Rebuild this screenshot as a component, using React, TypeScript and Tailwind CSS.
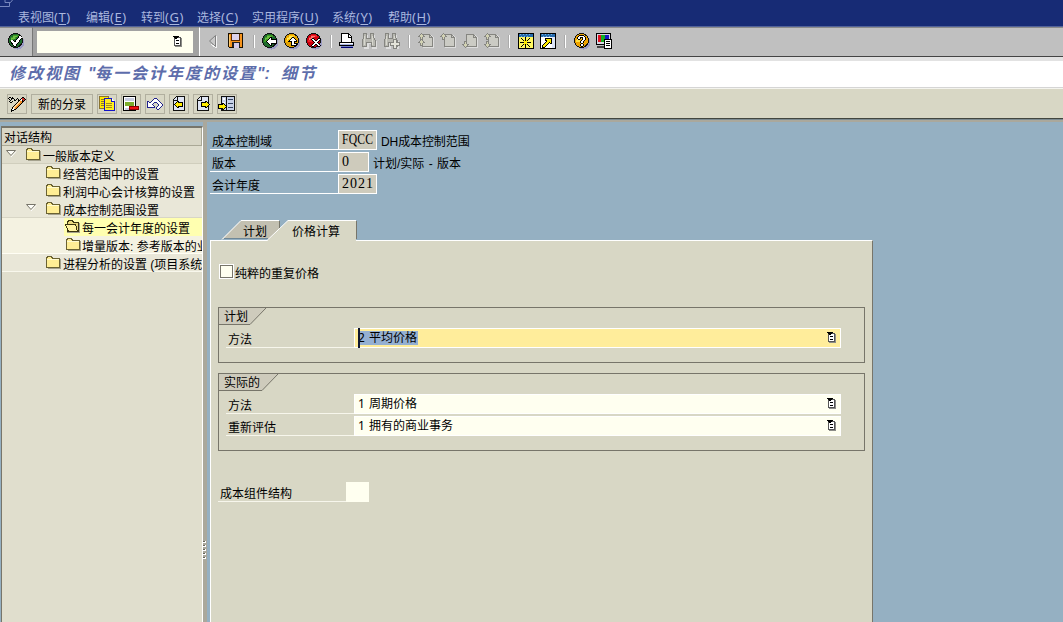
import React from "react";

type Kids = { children?: React.ReactNode };

const Svg = ({ w = 18, h = 18, children }: Kids & { w?: number; h?: number }) => (
  <svg width={w} height={h} viewBox={`0 0 ${w} ${h}`} className="block shrink-0" shapeRendering="crispEdges">
    {children}
  </svg>
);

const palette: Record<string, string> = {
  k: "#000000",
  w: "#ffffff",
  s: "#8c8c88",
  n: "#20208c",
  o: "#f08a24",
  p: "#ffd79a",
  r: "#c83228",
  y: "#ffec00",
  g: "#858580",
  c: "#d2d2b4",
  m: "#555555",
};

const Pixels = ({ map }: { map: string[] }) => (
  <Svg w={map[0].length} h={map.length}>
    {map.flatMap((line, y) =>
      line.split("").map((ch, x) =>
        palette[ch] ? <rect key={`${x}-${y}`} x={x} y={y} width="1" height="1" fill={palette[ch]} /> : null
      )
    )}
  </Svg>
);

const Ball = ({ dark, mid, light, children }: Kids & { dark: string; mid: string; light: string }) => (
  <Svg>
    <circle cx="10.500" cy="10.500" r="7" fill="#9c9cc4" />
    <circle cx="8.500" cy="8.500" r="7" fill={dark} stroke="#111" />
    <path d="M3 8h1V5h2V3h6v2H9v2H7v3H3z" fill={mid} />
    <path d="M4 6h2V4h4v1H8v2H5v1H4z" fill={light} />
    {children}
  </Svg>
);

const arrowLeft = [
  "....kk.....",
  "...kwk.....",
  "..kwwkkkkkk",
  ".kwwwwwwwwk",
  "kwwwwwwwwwk",
  ".kwwwwwwwwk",
  "..kwwkkkkkk",
  "...kwk.....",
  "....kk.....",
];

const CheckIcon = () => (
  <Ball dark="#1d6b2c" mid="#3f9b25" light="#6cc040">
    <path d="M4.500 8.500l3.500 4 6-8" fill="none" stroke="#000" strokeWidth="4" />
    <path d="M4.500 8.500l3.500 4 6-8" fill="none" stroke="#fff" strokeWidth="2.400" />
  </Ball>
);
const BackIcon = () => (
  <Ball dark="#1d6b2c" mid="#3f9b25" light="#6cc040">
    <g transform="translate(5 5)">
      <Pixels map={arrowLeft} />
    </g>
  </Ball>
);
const ExitIcon = () => (
  <Ball dark="#e0a000" mid="#ffc20c" light="#ffe95a">
    <g transform="translate(5 5)">
      <Pixels
        map={[
          "....kk.....",
          "...kwwk....",
          "..kwwwwk...",
          ".kwwwwwwk..",
          "kkkkwwkkk..",
          "...kwwk....",
          "...kwwkkk..",
          "...kwwwwk..",
          "...kkkkkk..",
        ]}
      />
    </g>
  </Ball>
);
const CancelIcon = () => (
  <Ball dark="#cf0010" mid="#ee2028" light="#ff7770">
    <g transform="translate(6 6)">
      <Pixels
        map={[
          ".kk....kk.",
          "kwwk..kwwk",
          ".kwwkkwwk.",
          "..kwwwwk..",
          "...kwwk...",
          "..kwwwwk..",
          ".kwwkkwwk.",
          "kwwk..kwwk",
          ".kk....kk.",
        ]}
      />
    </g>
  </Ball>
);
const HelpIcon = () => (
  <Ball dark="#f0a400" mid="#ffe040" light="#fff27a">
    <g transform="translate(4 3)">
      <Pixels
        map={[
          "..kkkkk...",
          ".kwwwwwk..",
          "kwwkkkwwk.",
          "kwwk.kwwk.",
          ".kk..kwwk.",
          "....kwwk..",
          "...kwwk...",
          "...kwwk...",
          "....kk....",
          "...kwwk...",
          "...kwwk...",
          "....kk....",
        ]}
      />
    </g>
  </Ball>
);
const TriangleIcon = () => (
  <Svg>
    <path d="M11.500 3.500v11L5.500 9z" fill="#c9c9c9" stroke="#808080" shapeRendering="auto" />
    <path d="M12.500 4v12M7 12l5 4" stroke="#f4f4f4" />
  </Svg>
);
const SaveIcon = () => (
  <Svg>
    <path d="M1.500 1.500h14v14h-13l-1-1z" fill="#f7941d" stroke="#1a1000" />
    <path d="M5 2h7v6H5z" fill="#dcd2ec" />
    <path d="M4.500 2v6.500h8V2" fill="none" stroke="#5a2a00" />
    <path d="M5 10h8v5H5z" fill="#222" />
    <path d="M7 11h5v5H7z" fill="#d6ccea" />
    <path d="M2 3h1v11H2z" fill="#ffc86a" />
  </Svg>
);
const PrintIcon = () => (
  <Svg>
    <path d="M3.500 11.500V1.500h7l3 3v7z" fill="#fff" stroke="#000" />
    <path d="M10.500 1v4h3" fill="none" stroke="#000" />
    <path d="M1.500 10.500h14v3h-14z" fill="#fff" stroke="#000" />
    <path d="M2 12h13v1H2z" fill="#a9b4e6" />
    <path d="M3 14h12v2H3z" fill="#7484c8" />
    <path d="M3 15h12v1H3z" fill="#000070" />
  </Svg>
);
const FindIcon = ({ plus = false }: { plus?: boolean }) => (
  <Svg>
    <path d="M4 2h3v5h4V2h3v4l2 3v7h-5v-5H8v5H3V8l1-2z" transform="translate(1 1)" fill="#dedede" />
    <path d="M3.500 1.500h3v5h4v-5h3v4l2 3v6h-4v-4h-5v4h-4v-6l1-3z" fill="#b9b9b2" stroke="#858580" />
    <path d="M4.500 4v9m8-9v9" stroke="#d8d8cf" />
    {plus && <path d="M11.500 7.500h3v3h3v3h-3v3h-3v-3h-3v-3h3z" fill="#e4e4da" stroke="#858580" />}
  </Svg>
);

const upArrow = ["...g...", "..gcg..", ".gcccg.", "ggcccgg", "..gcg..", "..gcg..", "..ggg.."];
const downArrow = [...upArrow].reverse();

const PageNavIcon = ({ kind }: { kind: "first" | "prev" | "next" | "last" }) => (
  <Svg>
    <path d="M6 3h9l2 3v10H6z" fill="#dedede" />
    <path d="M5.500 2.500h7l3 3v9h-10z" fill="#cbcbc4" stroke="#858580" />
    <path d="M12.500 2v3.500h3" fill="none" stroke="#858580" />
    {kind !== "next" && (
      <g transform="translate(1 1)">
        <Pixels map={upArrow} />
      </g>
    )}
    {kind === "first" && (
      <g transform="translate(1 7)">
        <Pixels map={upArrow} />
      </g>
    )}
    {(kind === "next" || kind === "last") && (
      <g transform="translate(1 9)">
        <Pixels map={downArrow} />
      </g>
    )}
  </Svg>
);
const WindowFrame = ({ children }: Kids) => (
  <Svg>
    <path d="M1.500 1.500h15v15h-15z" fill="#fff" stroke="#000" />
    <path d="M2 2h14v3H2z" fill="#276cae" />
    <path d="M3 2h1v1H3zm3 0h1v1H6zm3 0h1v1H9zm3 0h1v1h-1zM4 4h1v1H4zm3 0h1v1H7zm3 0h1v1h-1z" fill="#78b5df" />
    {children}
  </Svg>
);
const NewSessionIcon = () => (
  <WindowFrame>
    <path d="M2 5h14v11H2z" fill="#fff760" />
    <g transform="translate(3 5)">
      <Pixels
        map={[
          ".....k.....",
          ".k...k...k.",
          "..k..k..k..",
          "...kykyk...",
          "....yyy....",
          "kkkkyyykkkk",
          "....yyy....",
          "...kykyk...",
          "..k..k..k..",
          ".k...k...k.",
          ".....k.....",
        ]}
      />
    </g>
  </WindowFrame>
);
const ShortcutIcon = () => (
  <WindowFrame>
    <path d="M13 5h3v11h-3z" fill="#dce5f7" />
    <g transform="translate(3 6)">
      <Pixels
        map={[
          "...kkkkkkk",
          "...kyyyyyk",
          "...kkyyyyk",
          "....kyyyyk",
          "...kyyykyk",
          "..kyyyk.kk",
          ".kyyyk....",
          "kyyyk.....",
          "kyyk......",
          "kkk.......",
        ]}
      />
    </g>
  </WindowFrame>
);
const LayoutIcon = () => (
  <Svg>
    <path d="M1.500 1.500h14v11h-14z" fill="#d8d8e4" stroke="#000" />
    <path d="M3 3h4v7H3z" fill="#e01020" />
    <path d="M6 3h4v7H6z" fill="#10b020" />
    <path d="M10 3h4v7h-4z" fill="#1818c0" />
    <path d="M2 14h8v2H2z" fill="#444" />
    <path d="M9.500 7.500h7v9h-7z" fill="#fff" stroke="#000" />
    <path d="M11 9.500h4M11 11.500h4M11 13.500h4" stroke="#000" />
  </Svg>
);
const ListIcon = () => (
  <Pixels
    map={[
      "kkkkkk....",
      ".kkkkmmm..",
      ".mkkwwwms.",
      ".mwwwwwms.",
      ".mwkkkwms.",
      ".mwwwwwms.",
      ".mwwwwwms.",
      ".mwkkkwms.",
      ".mwwwwwms.",
      ".mmmmmmms.",
      "..sssssss.",
    ]}
  />
);
const PencilIcon = () => (
  <Pixels
    map={[
      "..................",
      ".kk.k.........kk..",
      "k..kkk...k...krrk.",
      ".k.k..k.k.k.kwrrrk",
      "..k...kk..kkpwkrk.",
      ".k..k.....kpookk..",
      "..kk.....kppook...",
      "........kppook....",
      ".......kppook.....",
      "......kppook......",
      ".....kppook.......",
      "....kppook........",
      "....kwpok.........",
      "...kwwkk..........",
      "...kkk............",
      "...k..............",
    ]}
  />
);
const CopyIcon = () => (
  <Svg>
    <path d="M1.500 1.500h9v12h-9z" fill="#ffe800" stroke="#8a7430" />
    <path d="M3 4.500h4M3 6.500h4M3 8.500h4M3 10.500h4" stroke="#8a7430" />
    <path d="M6.500 3.500h7l3 3v9h-10z" fill="#ffee20" stroke="#1414c8" />
    <path d="M13.500 3v3.500h3" fill="#fff" stroke="#1414c8" />
    <path d="M8 8.500h6M8 10.500h6M8 12.500h6" stroke="#a08820" />
  </Svg>
);
const DeleteIcon = () => (
  <Svg>
    <path d="M1.500 1.500h12v14h-12z" fill="#fff" stroke="#000" />
    <path d="M3 3h9v3H3z" fill="#c9cee2" />
    <path d="M3 7h9v4H3z" fill="#7cac2c" />
    <path d="M3 13h6v2H3z" fill="#c9cee2" />
    <path d="M7.500 11.500h9v3h-9z" fill="#ef1010" stroke="#8b0000" />
  </Svg>
);
const UndoIcon = () => (
  <Pixels
    map={[
      "........nnn.......",
      ".......nwwwn......",
      "......nwwwwwn.....",
      ".nn..nwwwwwwwn....",
      ".nwnnwwwnnnwwwn...",
      ".nwwwwwn...nwwwn..",
      ".nwwwwn.....nwwwn.",
      ".nwwwwwn....nwwwn.",
      ".nwwwwwwn..nwwwn..",
      ".nnnnnnnn.nwwwn...",
      "..........nwwn....",
      "...........nn.....",
    ]}
  />
);

const yellowArrow = ["...kk....", "..kykkkkk", ".kyyyyyyk", "kyyyyyyyk", ".kyyyyyyk", "..kykkkkk", "...kk...."];

const DocArrow = ({ dir }: { dir: "left" | "right" }) => (
  <Svg>
    <path d="M3.500 4.500l3-3h8v14h-11z" fill="#dfe5f4" stroke="#111" />
    <path d="M4 5.500h3.500V2" fill="none" stroke="#111" />
    <g transform={dir === "left" ? "translate(4 6)" : "translate(16 6) scale(-1 1)"}>
      <Pixels map={yellowArrow} />
    </g>
  </Svg>
);
const PositionIcon = () => (
  <Svg>
    <path d="M3.500 1.500h13v14h-13z" fill="#c7d1e8" stroke="#111" />
    <path d="M8.500 2v13" stroke="#111" />
    <path d="M10 4.500h5M10 8.500h5M10 12.500h5" stroke="#33435e" />
    <path d="M5 3h2v2H5zm0 4h2v1H5z" fill="#fff" />
    <g transform="translate(9 8) scale(-1 1)">
      <Pixels map={yellowArrow} />
    </g>
  </Svg>
);

const Folder = ({ open = false }: { open?: boolean }) => (
  <Svg w={16} h={14}>
    <path d="M14 3h1v10H2v-1h12z" fill="#a5a28e" />
    {open ? (
      <>
        <path d="M2.500 11.500v-9l1-2h4l1 2h5v9z" fill="#e9d87c" stroke="#3a3410" />
        <path d="M0.500 4.500h10l2 7h-9z" fill="#fff3a0" stroke="#3a3410" />
      </>
    ) : (
      <>
        <path d="M0.500 2.500l1-2h4l1 2h7v9h-13z" fill="#ffee94" stroke="#6a6232" />
        <path d="M1 3h12v1H1z" fill="#fffbd0" />
      </>
    )}
  </Svg>
);
const Expander = () => (
  <svg width="11" height="8" viewBox="0 0 11 8" className="block shrink-0">
    <path d="M0.500 0.500h9l-4.500 5z" fill="#fdfdf8" stroke="#77756a" />
    <path d="M5 7l5-5.500" stroke="#fff" />
  </svg>
);

const menus: [string, string, string][] = [
  ["表视图", "T", "w-[68px]"],
  ["编辑", "E", "w-[55px]"],
  ["转到", "G", "w-[56px]"],
  ["选择", "C", "w-[55px]"],
  ["实用程序", "U", "w-[80px]"],
  ["系统", "Y", "w-[56px]"],
  ["帮助", "H", "w-[56px]"],
];

const Cell = ({ w = "w-[22px]", children }: Kids & { w?: string }) => (
  <div className={`flex h-[26px] shrink-0 items-center justify-center ${w}`}>{children}</div>
);
const Sep = ({ w = "w-[12px]" }: { w?: string }) => (
  <Cell w={w}>
    <div className="h-[13px] w-[2px] border-l border-[#aaa] bg-white" />
  </Cell>
);
const ToolButton = ({ children, w = "w-[20px]" }: Kids & { w?: string }) => (
  <div className={`flex h-[20px] shrink-0 items-center justify-center border border-[#b1af9f] ${w}`}>{children}</div>
);

type Row = { label: string; indent: string; exp?: boolean; open?: boolean; tight?: boolean; bg: string };
const rows: Row[] = [
  { label: "一般版本定义", indent: "pl-[24px]", exp: true, bg: "bg-[#dfddcd] border-b border-[#d0cebd]" },
  { label: "经营范围中的设置", indent: "pl-[44px]", bg: "bg-[#e9e7d8]" },
  { label: "利润中心会计核算的设置", indent: "pl-[44px]", bg: "bg-[#e9e7d8]" },
  { label: "成本控制范围设置", indent: "pl-[44px]", exp: true, bg: "bg-[#e9e7d8] border-b border-[#d8d6c6]" },
  { label: "每一会计年度的设置", indent: "pl-[63px]", open: true, bg: "bg-[#f4f2e1]" },
  { label: "增量版本: 参考版本的业", indent: "pl-[64px]", tight: true, bg: "bg-[#f4f2e1] border-b border-[#fffef4]" },
  { label: "进程分析的设置 (项目系统", indent: "pl-[44px]", bg: "bg-[#e9e7d8] border-b border-[#f8f7ec]" },
];

const TreeRow = ({ r }: { r: Row }) => (
  <div className={`flex h-[18px] shrink-0 whitespace-nowrap ${r.bg} ${r.indent}`}>
    {r.exp && (
      <div className="flex w-0 justify-end pt-[4px]">
        <div className="mr-[9px]">
          <Expander />
        </div>
      </div>
    )}
    <div className={`flex h-[18px] flex-1 ${r.open ? "-ml-[1px] bg-[#ffffb0] pl-[1px]" : ""}`}>
      <div className={`shrink-0 pt-[2px] ${r.tight ? "w-[16px]" : "w-[17px]"}`}>
        <Folder open={r.open} />
      </div>
      <span className="pt-[2px] leading-[18px]">{r.label}</span>
    </div>
  </div>
);

const HeadRow = ({ label, value, w, desc }: { label: string; value: React.ReactNode; w: string; desc?: React.ReactNode }) => (
  <div className="flex h-[20px] items-stretch">
    <div className="w-[128px] border-b border-white pl-[2px] pt-[3px] leading-[18px]">{label}</div>
    <div
      className={`flex items-center border border-white bg-[#cecbbc] pl-[3px] font-['Liberation_Serif',serif] text-[14px] leading-[18px] tracking-[1px] ${w}`}
    >
      {value}
    </div>
    <div className="whitespace-pre pl-[4px] pt-[3px] leading-[18px]">{desc}</div>
  </div>
);

const FormLine = ({ label, children, active = false }: Kids & { label: string; active?: boolean }) => (
  <div className="flex h-[20px]">
    <div className="w-[128px] border-b border-[#f7f6ec] pl-[2px] pt-[3px] leading-[18px]">{label}</div>
    <div
      className={`relative flex w-[487px] justify-between border border-white pl-[3px] pr-[3px] ${
        active ? "bg-[#ffed9b]" : "bg-[#fffff0]"
      }`}
    >
      {active && <div className="absolute -top-[1px] left-[3px] z-10 h-[20px] w-[2px] bg-[#111830]" />}
      <span className="flex items-center">{children}</span>
      <div className="pt-[3px]">
        <ListIcon />
      </div>
    </div>
  </div>
);

const Group = ({ title, w, h, children }: Kids & { title: string; w: number; h: string }) => (
  <div className={`w-[647px] shrink-0 border border-[#77756a] ${h}`}>
    <div className="relative flex h-[17px] items-center pl-[5px]">
      <svg width={w + 18} height="17" className="absolute left-0 top-0">
        <path d={`M0 0H${w + 16}L${w} 16.500H0z`} fill="#cecbbc" />
        <path d={`M0 16.500H${w}L${w + 16} 0`} fill="none" stroke="#77756a" />
      </svg>
      <span className="relative pt-[1px] leading-[18px]">{title}</span>
    </div>
    <div className="flex flex-col gap-[2px] pl-[7px] pt-[3px]">{children}</div>
  </div>
);

export default function App() {
  return (
    <div className="flex h-[622px] w-[1063px] flex-col overflow-hidden bg-[#95b0c2] font-['Liberation_Sans','Noto_Sans_CJK_SC',sans-serif] text-[12px] text-black">
      <div className="relative flex h-[27px] shrink-0 items-end border-b border-[#53639a] bg-[#172b75] pl-[18px] text-[#aab7df]">
        <svg width="16" height="8" className="absolute left-0 top-0">
          <path d="M0 6.500h9.500V3M5 0v2.500h5.500l2-2.500" fill="none" stroke="#7787bd" />
        </svg>
        {menus.map(([t, k, w]) => (
          <div key={k} className={`flex h-[16px] shrink-0 items-center whitespace-nowrap ${w}`}>
            <span>{t}</span>
            <span className="-mt-[2px] font-['Noto_Sans',sans-serif] text-[13px] leading-[16px] tracking-[.5px]">
              (<span className="underline underline-offset-2">{k}</span>)
            </span>
          </div>
        ))}
      </div>

      <div className="flex h-[30px] shrink-0 border-b border-[#444] bg-[#c0c0c0]">
        <div className="flex w-[33px] justify-center border-r border-t border-r-[#777] border-t-[#8a8a8a]">
          <Cell><CheckIcon /></Cell>
        </div>
        <div className="flex w-[166px] items-center border-t border-[#8a8a8a] bg-[#a2a2a2] pl-[4px]">
          <div className="flex h-[22px] w-[156px] justify-end bg-[#fffff0] pr-[10px] pt-[5px]">
            <ListIcon />
          </div>
        </div>
        <div className="flex flex-1 border-l border-t border-l-white border-t-[#8a8a8a] pl-[2px]">
          <Cell><TriangleIcon /></Cell>
          <Cell w="w-[24px]"><SaveIcon /></Cell>
          <Sep w="w-[11px]" />
          <Cell><BackIcon /></Cell>
          <Cell><ExitIcon /></Cell>
          <Cell><CancelIcon /></Cell>
          <Sep w="w-[11px]" />
          <Cell><PrintIcon /></Cell>
          <Cell><FindIcon /></Cell>
          <Cell><FindIcon plus /></Cell>
          <Sep w="w-[13px]" />
          <Cell><PageNavIcon kind="first" /></Cell>
          <Cell><PageNavIcon kind="prev" /></Cell>
          <Cell><PageNavIcon kind="next" /></Cell>
          <Cell><PageNavIcon kind="last" /></Cell>
          <Sep />
          <Cell><NewSessionIcon /></Cell>
          <Cell><ShortcutIcon /></Cell>
          <Sep />
          <Cell><HelpIcon /></Cell>
          <Cell><LayoutIcon /></Cell>
        </div>
      </div>

      <div className="flex h-[31px] shrink-0 items-center border-b border-t-4 border-b-[#d5d5d5] border-t-[#e2e2e2] bg-white pl-[9px]">
        <div className="flex items-center whitespace-pre text-[16px] font-bold italic leading-[26px] tracking-[2px] text-[#5d6dab]">
          <span className="w-[79px]">修改视图</span>
          <span className="w-[7px] tracking-normal">"</span>
          <span className="w-[162px]">每一会计年度的设置</span>
          <span className="w-[24px] tracking-normal">":</span>
          <span>细节</span>
        </div>
      </div>

      <div className="flex h-[31px] shrink-0 gap-[4px] border-b border-t border-b-[#42463f] border-t-[#f4f4ee] bg-[#d8d7c5] pl-[7px] pt-[5px]">
        <ToolButton><PencilIcon /></ToolButton>
        <ToolButton w="w-[62px]"><span className="pt-[1px]">新的分录</span></ToolButton>
        <ToolButton><CopyIcon /></ToolButton>
        <ToolButton><DeleteIcon /></ToolButton>
        <ToolButton><UndoIcon /></ToolButton>
        <ToolButton><DocArrow dir="left" /></ToolButton>
        <ToolButton><DocArrow dir="right" /></ToolButton>
        <ToolButton><PositionIcon /></ToolButton>
      </div>
      <div className="h-[3px] shrink-0 border-t border-[#7b8a91] bg-[#aaa89c]" />

      <div className="flex min-h-0 flex-1">
        <div className="flex w-[203px] shrink-0 flex-col pl-[1px] pt-[4px]">
          <div className="flex min-h-0 flex-1 flex-col overflow-hidden border-l border-r border-t-2 border-l-[#77756a] border-r-white border-t-[#77756a] bg-[#e0decd]">
            <div className="flex h-[18px] shrink-0 items-center border-b border-r border-[#aaa896] bg-[#d8d6c6] pl-[2px] pt-[2px]">
              对话结构
            </div>
            {rows.map((r) => (
              <TreeRow key={r.label} r={r} />
            ))}
          </div>
        </div>
        <div className="flex w-[4px] shrink-0 flex-col gap-[2px] bg-[#aaa89c] pt-[419px]">
          {[0, 1, 2, 3, 4].map((i) => (
            <div key={i} className="h-[2px] w-[3px] border-b border-r border-white bg-[#666459]" />
          ))}
        </div>
        <div className="flex min-w-0 flex-1 flex-col pl-[3px] pt-[8px]">
          <div className="flex shrink-0 flex-col gap-[2px]">
            <HeadRow
              label="成本控制域"
              w="w-[39px]"
              value={<span className="origin-left scale-x-[.83] tracking-[.3px]">FQCC</span>}
              desc={<span className="-tracking-[.1px]">DH成本控制范围</span>}
            />
            <HeadRow label="版本" w="w-[31px]" value="0" desc={<span className="[word-spacing:1px]">计划/实际 - 版本</span>} />
            <HeadRow label="会计年度" w="w-[39px]" value="2021" />
          </div>

          <div className="relative mt-[26px] flex h-[20px] shrink-0">
            <svg width="150" height="21" className="absolute left-0 top-0 z-10">
              <path d="M12 19L31 .5H69V19z" fill="#c3c0b1" />
              <path d="M12 19.500L31 .5H69" fill="none" stroke="#fff" />
              <path d="M69.500 1v18" stroke="#77756a" />
              <path d="M14 18.500H58" stroke="#6f8797" />
              <path d="M57 21L78 .5H146V21z" fill="#d8d7c5" />
              <path d="M57 20.500L78 .5H146" fill="none" stroke="#fff" />
              <path d="M146.500 1v18" stroke="#77756a" />
            </svg>
            <span className="z-20 w-[82px] pl-[33px] pt-[3px] leading-[18px]">计划</span>
            <span className="z-20 pt-[3px] leading-[18px]">价格计算</span>
          </div>

          <div className="flex min-h-0 w-[663px] flex-1 flex-col border-l border-r border-t border-l-white border-r-[#77756a] border-t-white bg-[#d8d7c5] pl-[7px] pt-[23px]">
            <div className="flex h-[16px] shrink-0 items-start">
              <div className="ml-[1px] h-[15px] w-[15px] shrink-0 border border-white">
                <div className="h-[13px] w-[13px] border border-[#77756a] bg-[#fffff0]" />
              </div>
              <span className="pl-[1px] pt-[1px] leading-[18px]">纯粹的重复价格</span>
            </div>
            <div className="h-[27px] shrink-0" />
            <Group title="计划" w={31} h="h-[56px]">
              <FormLine label="方法" active>
                <span className="flex h-[14px] items-center bg-[#95b0d2] pr-[1px] leading-[14px]">
                  <span className="w-[11px] font-['Noto_Sans',sans-serif]">2</span>平均价格
                </span>
              </FormLine>
            </Group>
            <div className="h-[10px] shrink-0" />
            <Group title="实际的" w={43} h="h-[78px]">
              <FormLine label="方法">
                <span className="w-[11px] font-['Noto_Sans',sans-serif]">1</span>周期价格
              </FormLine>
              <FormLine label="重新评估">
                <span className="w-[11px] font-['Noto_Sans',sans-serif]">1</span>拥有的商业事务
              </FormLine>
            </Group>
            <div className="mt-[31px] flex h-[20px] shrink-0">
              <div className="w-[128px] border-b border-[#f7f6ec] pl-[2px] pt-[3px] leading-[18px]">成本组件结构</div>
              <div className="w-[23px] bg-[#fffff0]" />
            </div>
          </div>
        </div>
      </div>
    </div>
  );
}
